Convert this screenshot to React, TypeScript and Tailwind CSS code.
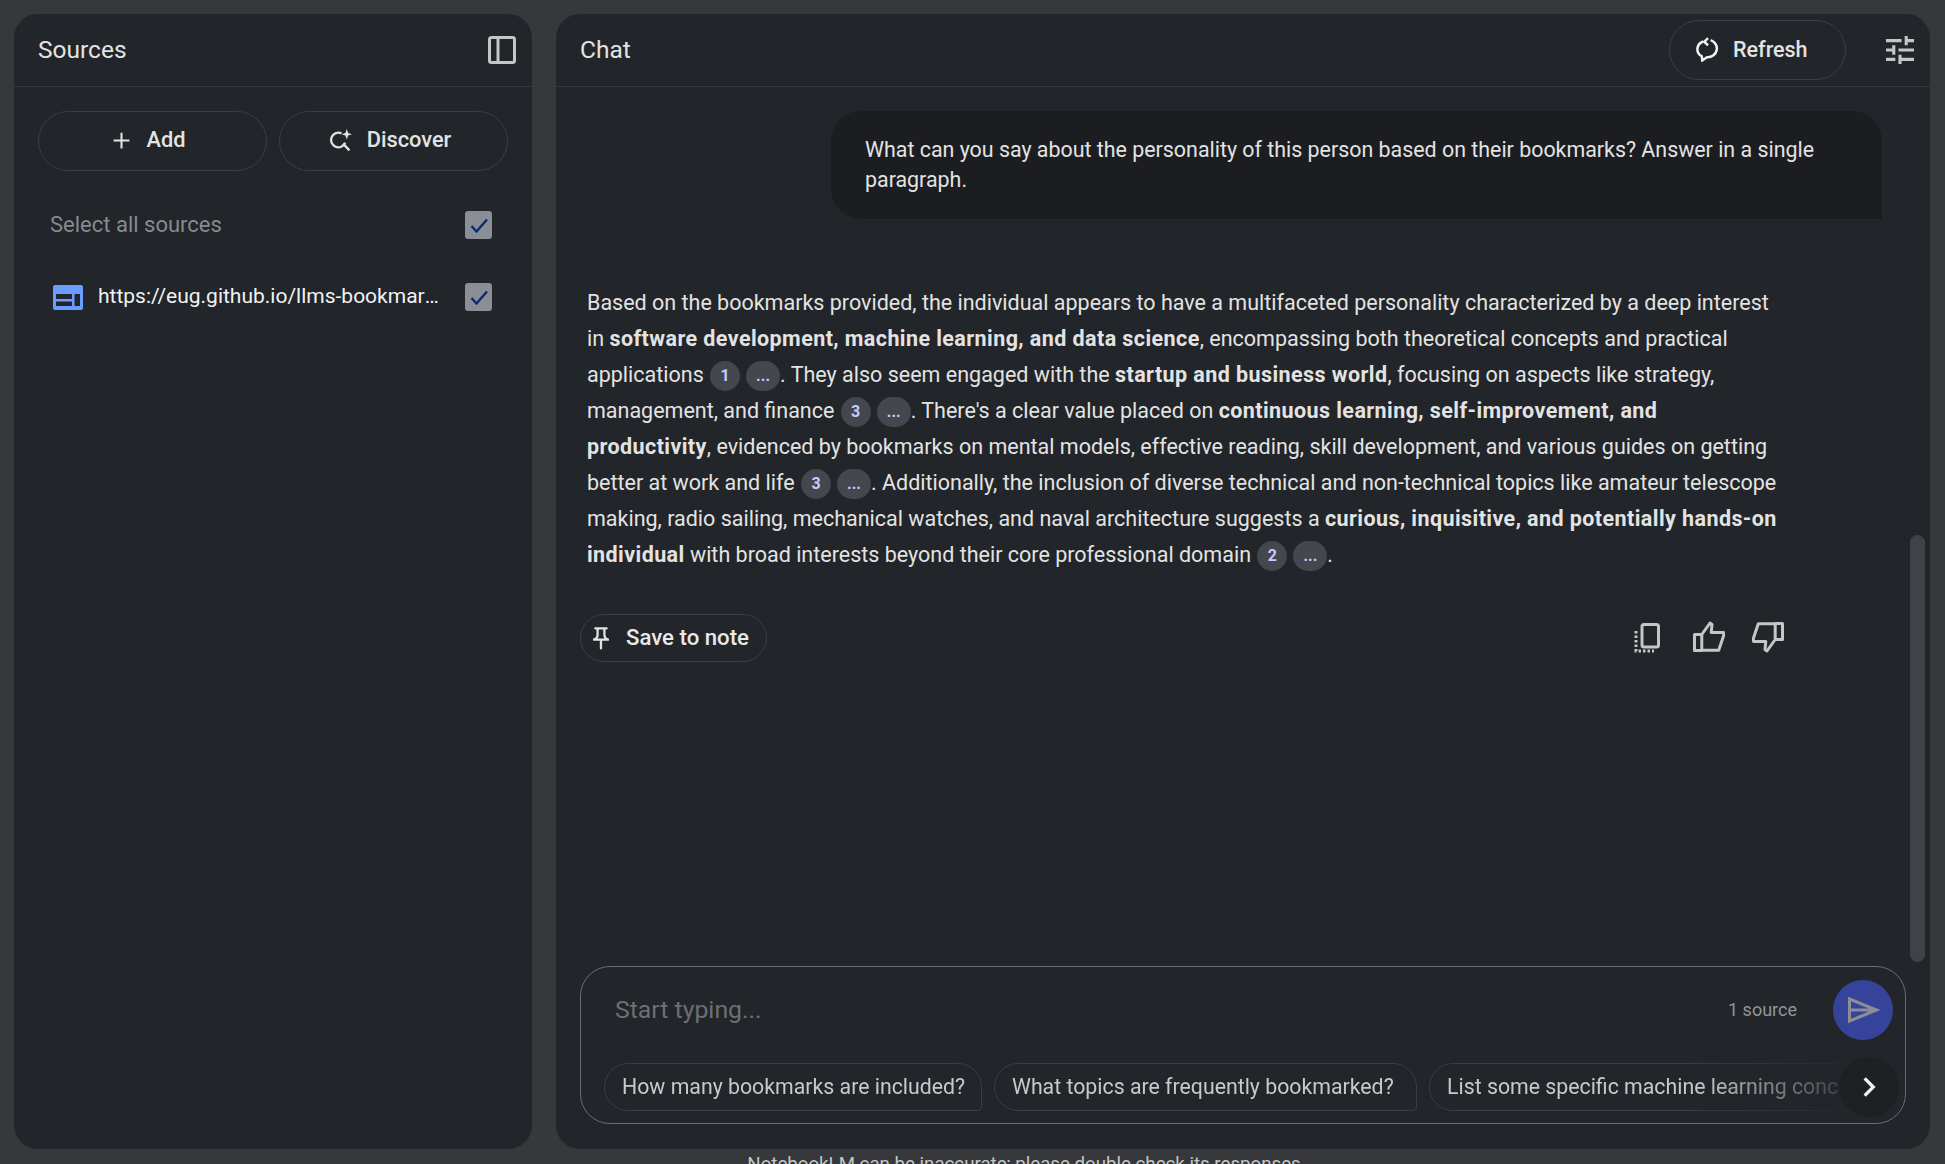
const FONT = "font-['Roboto','Liberation_Sans',sans-serif]";

function Check() {
  return (
    <div className="w-[27px] h-[28px] rounded-[3px] bg-[#8a8e97] flex items-center justify-center shrink-0">
      <svg viewBox="0 0 24 24" className="w-[24px] h-[24px]" fill="none" stroke="#0f2a6b" strokeWidth="2.4">
        <path d="M4.500 13l5 5.500L20 6.500" />
      </svg>
    </div>
  );
}

function Cite({ t }: { t: string }) {
  return (
    <span className={`inline-flex items-center justify-center h-[30px] rounded-full bg-[#45474f] text-[#c4cbff] text-[16px] font-bold tracking-normal align-middle ${t === "..." ? "w-[34px] ml-[6px]" : "w-[30px] ml-[1px]"}`}>
      {t}
    </span>
  );
}

function Bold({ children }: { children: React.ReactNode }) {
  return <b className="font-bold tracking-[0.42px]">{children}</b>;
}

function PillButton({ children, w }: { children: React.ReactNode; w: string }) {
  return (
    <button className={`h-[60px] ${w} rounded-full border border-[#3a3d41] flex items-center justify-center gap-[14px] pr-[8px] pb-[2px] text-[21.800px] font-medium text-[#e3e3e3]`}>
      {children}
    </button>
  );
}

function Chip({ children, w }: { children: React.ReactNode; w: string }) {
  return (
    <div className={`h-[48px] ${w} shrink-0 flex items-center pl-[17px] border border-[#3a3d41] rounded-tl-[24px] rounded-tr-[24px] rounded-bl-[24px] rounded-br-[4px] text-[21.300px] text-[#c8c9cb] whitespace-nowrap overflow-hidden`}>
      {children}
    </div>
  );
}

export default function App() {
  return (
    <div className={`${FONT} h-[1164px] overflow-hidden bg-[#37383b] text-[#e3e3e3]`}>
      <div className="flex gap-[24px] pt-[14px] pl-[14px] pr-[15px] h-[1149px]">
        {/* Sources */}
        <aside className="w-[518px] shrink-0 rounded-[24px] bg-[#222529] flex flex-col">
          <header className="h-[73px] shrink-0 border-b border-[#35373b] flex items-center justify-between pl-[24px] pr-[16px]">
            <h2 className="text-[24.500px] text-[#e3e3e3] font-normal">Sources</h2>
            <svg viewBox="0 0 28 28" className="w-[28px] h-[28px]" fill="none" stroke="#c4c7c5" strokeWidth="3">
              <rect x="1.500" y="1.500" width="25" height="25" rx="2" />
              <path d="M10 1.500v25" />
            </svg>
          </header>
          <div className="flex gap-[12px] pl-[24px] pt-[24px]">
            <PillButton w="w-[229px]">
              <svg viewBox="0 0 24 24" className="w-[21px] h-[21px]" fill="none" stroke="#e3e3e3" strokeWidth="2.400">
                <path d="M12 3v18M3 12h18" />
              </svg>
              <span>Add</span>
            </PillButton>
            <PillButton w="w-[229px]">
              <svg viewBox="0 0 24 24" className="w-[25px] h-[25px]" fill="none" stroke="#e3e3e3" strokeWidth="2.200">
                <path d="M13 5.200A7 7 0 1 0 16.500 14" />
                <path d="M14.500 15l6 6.500" />
                <path d="M18 1l1.300 3.700L23 6l-3.700 1.300L18 11l-1.300-3.700L13 6l3.700-1.300z" fill="#e3e3e3" stroke="none" />
              </svg>
              <span>Discover</span>
            </PillButton>
          </div>
          <div className="flex items-center justify-between pl-[36px] pr-[40px] mt-[27px] h-[54px]">
            <span className="text-[22px] text-[#878a8f] pb-[1px]">Select all sources</span>
            <Check />
          </div>
          <div className="flex items-center justify-between pl-[39px] pr-[40px] mt-[18px] h-[54px]">
            <div className="flex items-center gap-[15px] min-w-0">
              <svg viewBox="0 0 30 25" className="w-[30px] h-[25px] shrink-0">
                <rect width="30" height="25" rx="2" fill="#6b9cff" />
                <path d="M3 9h16v5H3zM3 16.500h16V21H3zM21.500 9H27v12h-5.500z" fill="#222529" />
              </svg>
              <span className="w-[346px] text-[21px] text-[#f1f2f3] whitespace-nowrap overflow-hidden text-ellipsis">
                https://eug.github.io/llms-bookmarks/index.html
              </span>
            </div>
            <Check />
          </div>
        </aside>

        {/* Chat */}
        <main className="flex-1 rounded-[24px] bg-[#222529] flex flex-col relative min-w-0">
          <header className="h-[73px] shrink-0 border-b border-[#35373b] flex items-center pl-[24px] pr-[16px]">
            <h2 className="text-[24.500px] font-normal flex-1">Chat</h2>
            <button className="h-[60px] w-[177px] rounded-full border border-[#3a3d41] flex items-center pl-[25px] gap-[13px] text-[21.500px] font-medium -mt-[1px]">
              <svg viewBox="0 0 24 24" className="w-[25px] h-[25px]" fill="none" stroke="#f1f2f3" strokeWidth="2.400">
                <path d="M8 4.300A9 8 0 0 0 6.500 18.500l.5 4 4.500-3H12a9 8.500 0 0 0 3-16.500" />
                <path d="M12.500 1L9 4.500 12.500 8" />
              </svg>
              <span className="pt-[1px]">Refresh</span>
            </button>
            <svg viewBox="3 3 18 18" className="w-[28px] h-[28px] ml-[40px]" fill="#c4c7c5">
              <path d="M3 17v2h6v-2H3zM3 5v2h10V5H3zm10 16v-2h8v-2h-8v-2h-2v6h2zM7 9v2H3v2h4v2h2V9H7zm14 4v-2H11v2h10zm-6-4h2V7h4V5h-4V3h-2v6z" />
            </svg>
          </header>

          <div className="flex-1 min-h-0 flex flex-col">
            <div className="ml-[275px] mr-[48px] mt-[24px] h-[108px] rounded-tl-[30px] rounded-tr-[30px] rounded-bl-[30px] bg-[#1b1d20] pl-[34px] pr-[50px] pt-[24px] text-[21.400px] leading-[30px] text-[#e3e3e3]">
              What can you say about the personality of this person based on their bookmarks? Answer in a single paragraph.
            </div>

            <div className="ml-[31px] mt-[66px] text-[21.500px] leading-[36px] text-[#e3e3e3] whitespace-nowrap">
              <div>Based on the bookmarks provided, the individual appears to have a multifaceted personality characterized by a deep interest</div>
              <div>in <Bold>software development, machine learning, and data science</Bold>, encompassing both theoretical concepts and practical</div>
              <div>applications <Cite t="1" /><Cite t="..." />. They also seem engaged with the <Bold>startup and business world</Bold>, focusing on aspects like strategy,</div>
              <div>management, and finance <Cite t="3" /><Cite t="..." />. There's a clear value placed on <Bold>continuous learning, self-improvement, and</Bold></div>
              <div><Bold>productivity</Bold>, evidenced by bookmarks on mental models, effective reading, skill development, and various guides on getting</div>
              <div>better at work and life <Cite t="3" /><Cite t="..." />. Additionally, the inclusion of diverse technical and non-technical topics like amateur telescope</div>
              <div>making, radio sailing, mechanical watches, and naval architecture suggests a <Bold>curious, inquisitive, and potentially hands-on</Bold></div>
              <div><Bold>individual</Bold> with broad interests beyond their core professional domain <Cite t="2" /><Cite t="..." />.</div>
            </div>

            <div className="flex items-center justify-between ml-[24px] mr-[146px] mt-[41px] h-[48px]">
              <button className="h-[48px] w-[187px] rounded-full border border-[#3a3d41] flex items-center pl-[12px] gap-[17px] text-[22.200px] font-medium text-[#e8e9ea]">
                <svg viewBox="5 1 14 22" className="w-[16px] h-[25px]" fill="#e3e3e3">
                  <path d="M14 4v5c0 1.120.37 2.160 1 3H9c.65-.86 1-1.900 1-3V4h4m3-2H7c-.55 0-1 .45-1 1s.45 1 1 1h1v5c0 1.660-1.340 3-3 3v2h5.970v7l1 1 1-1v-7H19v-2c-1.660 0-3-1.340-3-3V4h1c.55 0 1-.45 1-1s-.45-1-1-1z" />
                </svg>
                <span>Save to note</span>
              </button>
              <div className="flex items-center">
                <svg viewBox="0 0 26 30" className="w-[26px] h-[30px]" fill="none" stroke="#c4c7c5" strokeWidth="3">
                  <rect x="8" y="1.500" width="16.500" height="22.500" rx="2" />
                  <path d="M2 8v20h18" strokeDasharray="2.500 2" />
                </svg>
                <svg viewBox="0 0 32 31" className="w-[32px] h-[31px] ml-[33px] mb-[3px]" fill="none" stroke="#c4c7c5" strokeWidth="3">
                  <path d="M1.500 13.500h7.300v16H1.500zM8.800 13.500L17 2l2 1.500-.8 8H30.500l.2 3-5 14.800H8.800" strokeLinejoin="round" />
                </svg>
                <svg viewBox="0 0 32 31" className="w-[32px] h-[31px] ml-[27px] mb-[1px]" fill="none" stroke="#c4c7c5" strokeWidth="3">
                  <path d="M30.500 17.500h-7.300v-16h7.300zM23.200 17.500L15 29l-2-1.500.8-8H1.500l-.2-3 5-14.800h16.900" strokeLinejoin="round" />
                </svg>
              </div>
            </div>
          </div>

          {/* Composer */}
          <div className="relative mx-[24px] mb-[25px] h-[158px] rounded-[30px] border border-[#6a6c70] shrink-0">
            <div className="flex items-center h-[85px] pl-[34px] pr-[12px]">
              <span className="flex-1 text-[24.800px] text-[#6e6f72]">Start typing...</span>
              <span className="text-[18px] text-[#90959a] mr-[36px] pb-[1px]">1 source</span>
              <div className="w-[60px] h-[60px] rounded-full bg-[#36439a] flex items-center justify-center">
                <svg viewBox="0 0 34 28" className="w-[34px] h-[28px] ml-[2px]" fill="none" stroke="#8d8e95" strokeWidth="3">
                  <path d="M2.500 3l27 11-27 11zM2.500 14h27" />
                </svg>
              </div>
            </div>
            <div className="flex gap-[12px] pl-[23px] pt-[11px] overflow-hidden mr-[30px] [mask-image:linear-gradient(to_right,black_86%,transparent_100%)]">
              <Chip w="w-[378px]">How many bookmarks are included?</Chip>
              <Chip w="w-[423px]">What topics are frequently bookmarked?</Chip>
              <Chip w="w-[560px]">List some specific machine learning concepts</Chip>
            </div>
            <div className="absolute right-[6px] top-[90px] w-[60px] h-[60px] rounded-full bg-[#1e2024] flex items-center justify-center">
              <svg viewBox="0 0 24 24" className="w-[26px] h-[26px]" fill="none" stroke="#f1f2f3" strokeWidth="3">
                <path d="M8 4l8 8-8 8" />
              </svg>
            </div>
          </div>

          {/* Scrollbar */}
          <div className="absolute right-[5px] top-[521px] w-[15px] h-[427px] rounded-full bg-[#3f4246]" />
        </main>
      </div>
      <p className="text-center text-[18.700px] text-[#c4c7c5] pl-[108px] pt-[3px] leading-[24px]">
        NotebookLM can be inaccurate; please double check its responses.
      </p>
    </div>
  );
}
